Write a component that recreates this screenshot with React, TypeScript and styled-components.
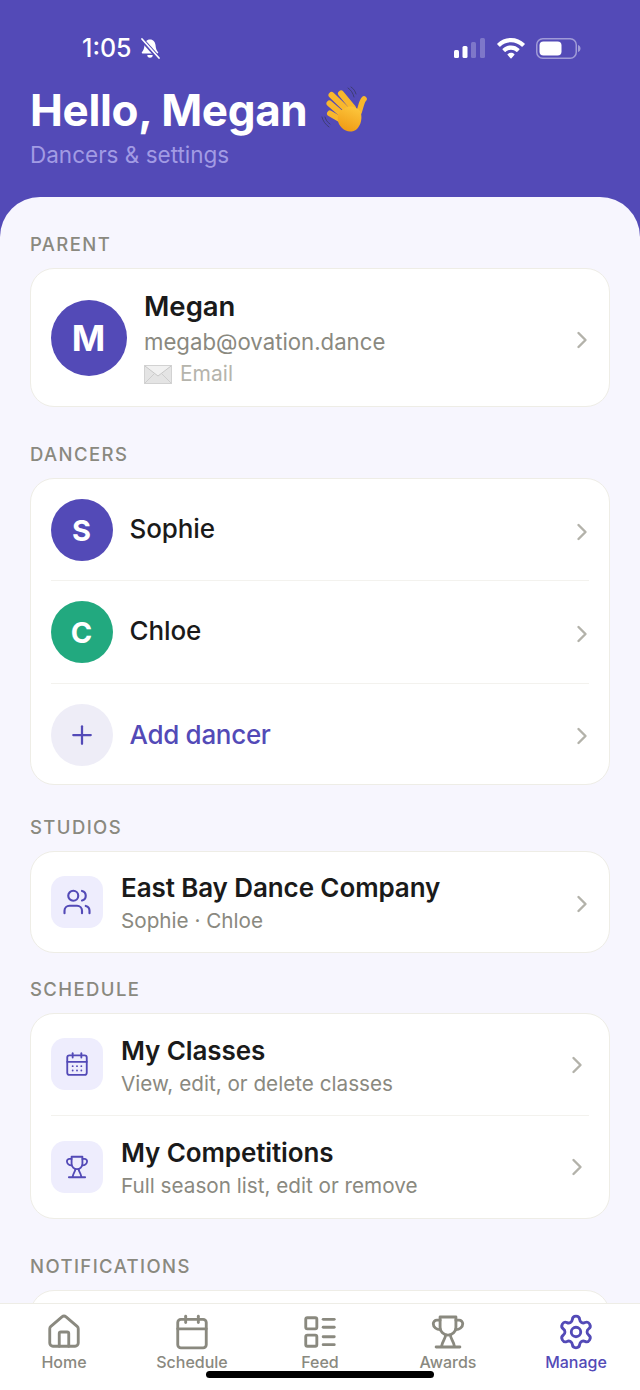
import React from 'react';
import styled, { createGlobalStyle } from 'styled-components';
import { CalendarDays, Calendar, ChevronRight, House, LayoutList, Plus, Settings, Users } from 'lucide-react';

const PURPLE = '#534ab7';
const INK = '#1a1a1a';
const GREY = '#8a897f';

const Global = createGlobalStyle`
  html, body {
    margin: 0;
    padding: 0;
    background: ${PURPLE};
  }
  * { box-sizing: border-box; }
`;

const WaveHand = () => (
  <HandSvg viewBox="0 0 50 48" width="50" height="48" fill="none">
    <defs>
      <linearGradient id="hand" x1="0.700" y1="0" x2="0.300" y2="1">
        <stop offset="0" stopColor="#fcc63c" />
        <stop offset="1" stopColor="#f09a14" />
      </linearGradient>
    </defs>
    <g stroke="#f9b72c" strokeWidth="6" strokeLinecap="round">
      <path d="M11.500 9 27 24" />
      <path d="M21 7.500 33 22" />
      <path d="M9.500 17.500 24 30" />
      <path d="M10 27.500 23 35" />
      <path d="M44 13c-3 3-3 9-6 16" strokeWidth="5.600" />
    </g>
    <path d="M21 25c5-6 14-6 19 0 3 6 1 14-3 18-5 4-11 3-15-1-5-5-6-12-1-17Z" fill="url(#hand)" />
    <g stroke="#3e3d74" strokeWidth="1" strokeLinecap="round">
      <path d="M28 2c3 2 5 5 6 9" />
      <path d="M31 1c3 2 4 4 5 7" />
      <path d="M2 31c1 4 3 7 7 10" />
      <path d="M5 31c1 3 2 5 5 7" />
    </g>
  </HandSvg>
);

const Envelope = () => (
  <svg width="28" height="19" viewBox="0 0 28 19">
    <rect x="0.500" y="0.500" width="27" height="18" fill="#e4e4e4" stroke="#d2d2d2" />
    <path d="M1 1l13 10L27 1" fill="#f1f1f1" stroke="#c8c8c8" />
    <path d="M1 18l9-9M27 18l-9-9" stroke="#cdcdcd" fill="none" />
  </svg>
);

const BellOff = () => (
  <svg width="20" height="21" viewBox="0 0 20 21" fill="#fff">
    <path d="M10 1.500c-3.400 0-5.200 2.600-5.500 5.600-.3 3.400-1 5.300-2.600 7.200-.4.500-.1 1.200.6 1.200h15c.7 0 1-.7.6-1.200-1.600-1.900-2.300-3.800-2.600-7.200-.3-3-2.100-5.600-5.500-5.600Z" />
    <path d="M7.300 17h5.400a2.700 2.700 0 0 1-5.400 0Z" />
    <path d="M1.500 1 18.500 20" stroke={PURPLE} strokeWidth="4.200" />
    <path d="M2 1 19 20" stroke="#fff" strokeWidth="1.700" strokeLinecap="round" />
  </svg>
);

const StatusIcons = () => (
  <StatusRight>
    <svg width="32" height="20" viewBox="0 0 32 20" fill="#fff">
      <rect x="0" y="12" width="5" height="8" rx="1.500" />
      <rect x="8.500" y="8" width="5" height="12" rx="1.500" />
      <rect x="17" y="4" width="5" height="16" rx="1.500" opacity="0.250" />
      <rect x="26" y="0" width="5" height="20" rx="1.500" opacity="0.250" />
    </svg>
    <svg width="28" height="21" viewBox="0 0 28 21" fill="#fff">
      <path d="M14 0c5.300 0 10 2 13.600 5.500.3.300.3.700 0 1l-2 2.100c-.3.300-.7.300-1 0C21.800 5.900 18.100 4.300 14 4.300S6.200 5.900 3.400 8.600c-.3.300-.7.300-1 0l-2-2.100c-.3-.3-.3-.7 0-1C4 2 8.700 0 14 0Z" />
      <path d="M14 7.400c3.200 0 6.100 1.200 8.300 3.300.3.300.3.700 0 1l-2 2.100c-.3.300-.7.300-1 0-1.400-1.300-3.300-2.100-5.300-2.100s-3.900.8-5.300 2.100c-.3.300-.7.300-1 0l-2-2.100c-.3-.3-.3-.7 0-1 2.200-2.100 5.100-3.300 8.300-3.300Z" />
      <path d="M14 14.800c1.300 0 2.500.5 3.300 1.300.3.300.3.700 0 1l-2.800 3.100c-.3.300-.7.300-1 0l-2.800-3.100c-.3-.3-.3-.7 0-1 .8-.8 2-1.300 3.300-1.300Z" />
    </svg>
    <svg width="45" height="21" viewBox="0 0 45 21" fill="none">
      <rect x="0.750" y="0.750" width="39.500" height="19.500" rx="6" stroke="#fff" strokeOpacity="0.450" strokeWidth="1.500" />
      <rect x="3.500" y="3.500" width="22" height="14" rx="4" fill="#fff" />
      <path d="M42 7c1.500.5 2.500 1.800 2.500 3.500S43.500 13.500 42 14V7Z" fill="#fff" fillOpacity="0.450" />
    </svg>
  </StatusRight>
);

// lucide's trophy has a different outline, this one has the crossed stem
const TrophyIcon = ({ size, strokeWidth }: { size: number; strokeWidth: number }) => (
  <svg
    width={size}
    height={size}
    viewBox="0 0 24 24"
    fill="none"
    stroke="currentColor"
    strokeWidth={strokeWidth}
    strokeLinecap="round"
    strokeLinejoin="round"
  >
    <path d="M7 2.500h10v6.500a5 5 0 0 1-10 0Z" />
    <path d="M7 4.500H5a2.300 2.300 0 0 0-2.300 2.300C2.700 9 4.800 10.500 7 10.500" />
    <path d="M17 4.500h2a2.300 2.300 0 0 1 2.300 2.300c0 2.200-2.100 3.700-4.300 3.700" />
    <path d="M10.500 13.800c0 2.500-2 3.700-2.500 7.200" />
    <path d="M13.500 13.800c0 2.500 2 3.700 2.500 7.200" />
    <path d="M4.500 21.500h15" />
  </svg>
);

const Chevron = ({ $inset, $drop }: { $inset?: boolean; $drop: number }) => (
  <ChevronBox $inset={$inset} $drop={$drop}>
    <ChevronRight size={28} strokeWidth={2.100} />
  </ChevronBox>
);

const tabs = [
  { label: 'Home', Icon: House },
  { label: 'Schedule', Icon: Calendar },
  { label: 'Feed', Icon: LayoutList },
  { label: 'Awards', Icon: TrophyIcon },
  { label: 'Manage', Icon: Settings, active: true },
];

export default function App() {
  return (
    <Page>
      <Global />
      <Header>
        <StatusBar>
          <StatusLeft>
            <Time>1:05</Time>
            <BellOff />
          </StatusLeft>
          <StatusIcons />
        </StatusBar>
        <Title>
          Hello, Megan <WaveHand />
        </Title>
        <Subtitle>Dancers &amp; settings</Subtitle>
      </Header>

      <Sheet>
        <Section $gap={35}>
          <SectionLabel>PARENT</SectionLabel>
          <Card>
            <ParentRow>
              <Avatar $size={76} $bg={PURPLE} $font={36}>M</Avatar>
              <ParentInfo>
                <ParentName>Megan</ParentName>
                <ParentEmail>megab@ovation.dance</ParentEmail>
                <ParentMethod>
                  <Envelope />
                  Email
                </ParentMethod>
              </ParentInfo>
              <Chevron $drop={5} />
            </ParentRow>
          </Card>
        </Section>

        <Section $gap={35}>
          <SectionLabel>DANCERS</SectionLabel>
          <Card>
            <DancerRow>
              <Avatar $size={62} $bg={PURPLE} $font={29}>S</Avatar>
              <DancerName>Sophie</DancerName>
              <Chevron $drop={3} />
            </DancerRow>
            <DancerRow>
              <Avatar $size={62} $bg="#22a97f" $font={29}>C</Avatar>
              <DancerName>Chloe</DancerName>
              <Chevron $drop={3} />
            </DancerRow>
            <DancerRow $last>
              <Avatar $size={62} $bg="#eeedf7" $font={29}>
                <Plus size={30} color={PURPLE} strokeWidth={1.800} />
              </Avatar>
              <DancerName $accent>Add dancer</DancerName>
              <Chevron $drop={3} />
            </DancerRow>
          </Card>
        </Section>

        <Section $gap={30}>
          <SectionLabel>STUDIOS</SectionLabel>
          <Card>
            <LinkRow $last $height={100}>
              <Tile><Users size={30} strokeWidth={1.700} /></Tile>
              <LinkInfo>
                <RowTitle>East Bay Dance Company</RowTitle>
                <RowSub>Sophie · Chloe</RowSub>
              </LinkInfo>
              <Chevron $drop={4} />
            </LinkRow>
          </Card>
        </Section>

        <Section $gap={24}>
          <SectionLabel>SCHEDULE</SectionLabel>
          <Card>
            <LinkRow $height={102}>
              <Tile><CalendarDays size={26} strokeWidth={1.700} /></Tile>
              <LinkInfo>
                <RowTitle>My Classes</RowTitle>
                <RowSub>View, edit, or delete classes</RowSub>
              </LinkInfo>
              <Chevron $inset $drop={1} />
            </LinkRow>
            <LinkRow $last $height={102}>
              <Tile><TrophyIcon size={26} strokeWidth={1.700} /></Tile>
              <LinkInfo>
                <RowTitle>My Competitions</RowTitle>
                <RowSub>Full season list, edit or remove</RowSub>
              </LinkInfo>
              <Chevron $inset $drop={1} />
            </LinkRow>
          </Card>
        </Section>

        <Section $gap={35}>
          <SectionLabel>NOTIFICATIONS</SectionLabel>
          <EmptyCard />
        </Section>
      </Sheet>

      <TabBar>
        {tabs.map(({ label, Icon, active }) => (
          <Tab key={label} $active={active}>
            <Icon size={38} strokeWidth={1.800} />
            <TabLabel>{label}</TabLabel>
          </Tab>
        ))}
      </TabBar>
      <HomeIndicator />
    </Page>
  );
}

const Page = styled.div`
  position: relative;
  display: flex;
  flex-direction: column;
  width: 640px;
  height: 1390px;
  overflow: hidden;
  background: ${PURPLE};
  font-family: Inter, 'Liberation Sans', sans-serif;
`;

const Header = styled.header`
  flex: none;
  height: 197px;
  padding: 33px 30px 0;
  color: #fff;
`;

const StatusBar = styled.div`
  display: flex;
  align-items: center;
  justify-content: space-between;
  height: 30px;
  padding: 0 29px 0 52px;
`;

const StatusLeft = styled.div`
  display: flex;
  align-items: center;
  gap: 8px;
`;

const Time = styled.span`
  font-size: 25px;
  font-weight: 500;
  line-height: 30px;
`;

const StatusRight = styled.div`
  display: flex;
  align-items: center;
  gap: 11px;
`;

const Title = styled.h1`
  display: flex;
  align-items: center;
  gap: 13px;
  height: 52px;
  margin: 21px 0 0;
  font-size: 44px;
  font-weight: 700;
  line-height: 52px;
  letter-spacing: -0.350px;
`;

const HandSvg = styled.svg`
  flex: none;
`;

const Subtitle = styled.p`
  margin: 5px 0 0;
  font-size: 22.500px;
  line-height: 28px;
  color: #a29be4;
`;

const Sheet = styled.main`
  flex: 1;
  min-height: 0;
  overflow: hidden;
  padding: 0 30px;
  background: #f7f6fe;
  border-radius: 40px 40px 0 0;
`;

const Section = styled.section<{ $gap: number }>`
  margin-top: ${p => p.$gap}px;
`;

const SectionLabel = styled.h2`
  margin: 0 0 12px;
  height: 24px;
  font-size: 18.500px;
  font-weight: 500;
  line-height: 24px;
  letter-spacing: 1.400px;
  color: ${GREY};
`;

const Card = styled.div`
  padding: 0 20px 0 19.500px;
  background: #fff;
  border: 1px solid #eeede6;
  border-radius: 24px;
`;

const EmptyCard = styled(Card)`
  height: 90px;
`;

const ParentRow = styled.div`
  display: flex;
  align-items: center;
  gap: 17.500px;
  height: 137px;
`;

const Avatar = styled.div<{ $size: number; $bg: string; $font: number }>`
  flex: none;
  display: flex;
  align-items: center;
  justify-content: center;
  width: ${p => p.$size}px;
  height: ${p => p.$size}px;
  border-radius: 50%;
  background: ${p => p.$bg};
  color: #fff;
  font-size: ${p => p.$font}px;
  font-weight: 700;
`;

const Info = styled.div`
  flex: 1;
  min-width: 0;
`;

const ParentInfo = styled(Info)`
  padding-top: 2px;
`;

const LinkInfo = styled(Info)`
  padding-top: 3px;
`;

const ParentName = styled.div`
  font-size: 27.500px;
  font-weight: 600;
  line-height: 32px;
  color: ${INK};
`;

const ParentEmail = styled.div`
  margin-top: 6px;
  font-size: 22.200px;
  line-height: 28px;
  color: ${GREY};
`;

const ParentMethod = styled.div`
  display: flex;
  align-items: center;
  gap: 8px;
  margin-top: 5px;
  font-size: 21px;
  line-height: 26px;
  color: #b5b4ac;
`;

const DancerRow = styled.div<{ $last?: boolean }>`
  display: flex;
  align-items: center;
  gap: 17px;
  padding: 20px 0 ${p => (p.$last ? 18.200 : 19.400)}px;
  border-bottom: ${p => (p.$last ? 'none' : '1px solid #f3f2ee')};
`;

const DancerName = styled.div<{ $accent?: boolean }>`
  flex: 1;
  padding-bottom: ${p => (p.$accent ? 0 : 2)}px;
  font-size: 26px;
  font-weight: 500;
  line-height: 32px;
  letter-spacing: ${p => (p.$accent ? -0.300 : -0.100)}px;
  color: ${p => (p.$accent ? PURPLE : INK)};
`;

const LinkRow = styled.div<{ $last?: boolean; $height: number }>`
  display: flex;
  align-items: center;
  gap: 18.500px;
  height: ${p => p.$height}px;
  border-bottom: ${p => (p.$last ? 'none' : '1px solid #f3f2ee')};
`;

const Tile = styled.div`
  flex: none;
  display: flex;
  align-items: center;
  justify-content: center;
  width: 52px;
  height: 52px;
  border-radius: 14px;
  background: #eeedfd;
  color: ${PURPLE};
`;

const RowTitle = styled.div`
  font-size: 26px;
  font-weight: 600;
  line-height: 31px;
  letter-spacing: -0.100px;
  color: ${INK};
`;

const RowSub = styled.div`
  margin-top: 5px;
  font-size: 20.700px;
  line-height: 26px;
  color: ${GREY};
`;

const ChevronBox = styled.span<{ $inset?: boolean; $drop: number }>`
  flex: none;
  display: flex;
  padding-top: ${p => p.$drop}px;
  margin-right: ${p => (p.$inset ? -2 : -7)}px;
  color: #b3b2aa;
`;

const TabBar = styled.nav`
  flex: none;
  display: grid;
  grid-template-columns: repeat(5, 1fr);
  height: 87px;
  padding-top: 9px;
  background: #fff;
  border-top: 1px solid #eeede6;
`;

const Tab = styled.div<{ $active?: boolean }>`
  display: flex;
  flex-direction: column;
  align-items: center;
  gap: 1px;
  color: ${p => (p.$active ? PURPLE : GREY)};
`;

const TabLabel = styled.span`
  font-size: 16px;
  font-weight: 500;
  line-height: 20px;
`;

const HomeIndicator = styled.div`
  position: absolute;
  left: 206px;
  bottom: 12px;
  width: 228px;
  height: 7px;
  border-radius: 4px;
  background: #000;
`;
